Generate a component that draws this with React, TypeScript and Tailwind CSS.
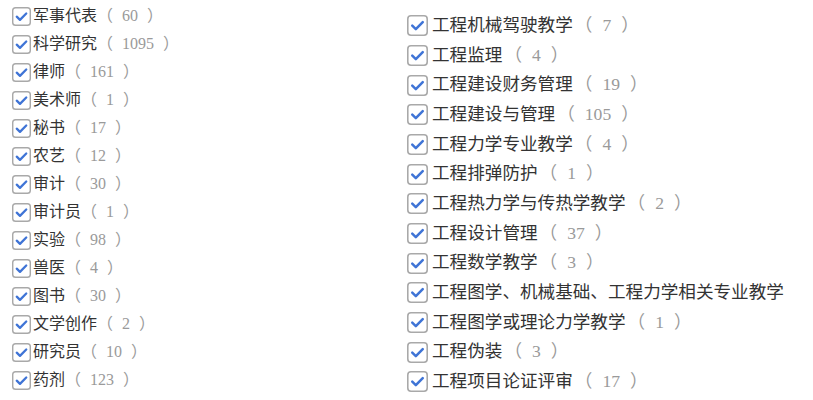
import React from "react";

const left: [string, number][] = [
  ["军事代表", 60],
  ["科学研究", 1095],
  ["律师", 161],
  ["美术师", 1],
  ["秘书", 17],
  ["农艺", 12],
  ["审计", 30],
  ["审计员", 1],
  ["实验", 98],
  ["兽医", 4],
  ["图书", 30],
  ["文学创作", 2],
  ["研究员", 10],
  ["药剂", 123],
];

const right: [string, number | null][] = [
  ["工程机械驾驶教学", 7],
  ["工程监理", 4],
  ["工程建设财务管理", 19],
  ["工程建设与管理", 105],
  ["工程力学专业教学", 4],
  ["工程排弹防护", 1],
  ["工程热力学与传热学教学", 2],
  ["工程设计管理", 37],
  ["工程数学教学", 3],
  ["工程图学、机械基础、工程力学相关专业教学", null],
  ["工程图学或理论力学教学", 1],
  ["工程伪装", 3],
  ["工程项目论证评审", 17],
];

const font = {
  fontFamily: '"Liberation Serif", "Noto Sans CJK SC", serif',
};

function Check({ size }: { size: number }) {
  return (
    <svg width={size} height={size} viewBox="0 0 20 20" className="shrink-0">
      <rect x="0.75" y="0.75" width="18.5" height="18.5" rx="3" fill="#fff" stroke="#a9a9a9" strokeWidth="1.5" />
      <path d="M5 10.2 L8.4 13.5 L15 6.8" fill="none" stroke="#3f74d6" strokeWidth="2.4" strokeLinecap="round" strokeLinejoin="round" />
    </svg>
  );
}

export default function App() {
  return (
    <div className="w-[813px] h-[400px] overflow-hidden bg-white flex" style={font}>
      <div className="w-[407px] shrink-0 pl-[12px] pt-[2px] flex flex-col">
        {left.map(([n, c]) => (
          <div key={n} className="h-[28px] flex items-center whitespace-nowrap text-[16px] leading-none">
            <Check size={19} />
            <span className="ml-[2px] text-[#333]">{n}</span>
            <span className="text-[#9a9a9a] flex items-center">
              <span>（</span>
              <span className="mx-[9px]">{c}</span>
              <span>）</span>
            </span>
          </div>
        ))}
      </div>
      <div className="flex-1 pt-[11px] flex flex-col overflow-hidden">
        {right.map(([n, c]) => (
          <div key={n} className="h-[29.67px] flex items-center whitespace-nowrap text-[17.6px] leading-none">
            <Check size={21} />
            <span className="ml-[4px] text-[#333]">{n}</span>
            {c !== null && (
              <span className="text-[#9a9a9a] flex items-center">
                <span className="ml-[2px]">（</span>
                <span className="mx-[10px]">{c}</span>
                <span>）</span>
              </span>
            )}
          </div>
        ))}
      </div>
    </div>
  );
}
